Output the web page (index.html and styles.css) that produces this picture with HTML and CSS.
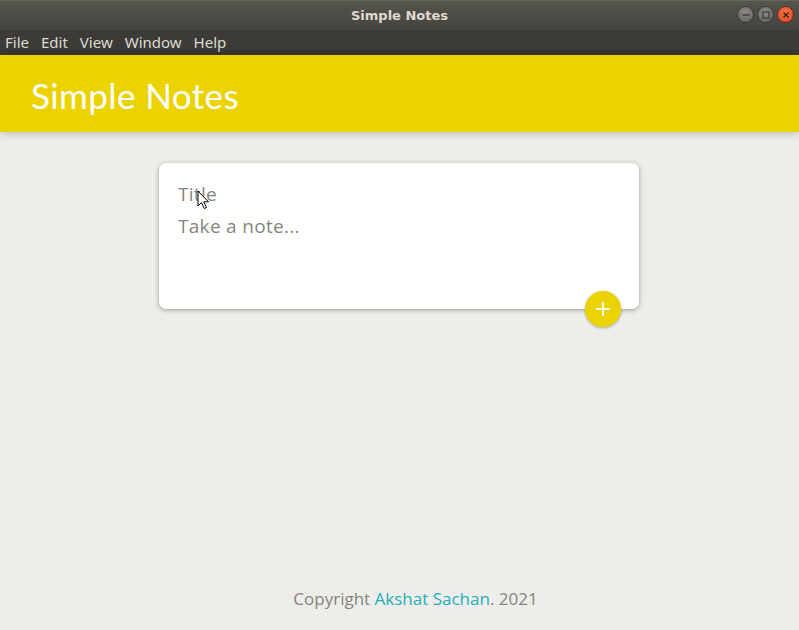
FILE: index.html
```html
<!DOCTYPE html>
<html>
<head>
<meta charset="utf-8">
<link rel="stylesheet" href="styles.css">
</head>
<body>
<div class="window">
  <div class="titlebar">
    <span class="wtitle">Simple Notes</span>
    <div class="wbtns">
      <span class="wb min"><svg width="14" height="14" viewBox="0 0 14 14"><line x1="3.5" y1="7" x2="10.5" y2="7" stroke="#3a3935" stroke-width="1.4"/></svg></span>
      <span class="wb max"><svg width="14" height="14" viewBox="0 0 14 14"><rect x="4" y="4" width="6" height="6" fill="none" stroke="#3a3935" stroke-width="1.2"/></svg></span>
      <span class="wb close"><svg width="14" height="14" viewBox="0 0 14 14"><path d="M4.5 4.5L9.5 9.5M9.5 4.5L4.5 9.5" stroke="#4a1a10" stroke-width="1.4"/></svg></span>
    </div>
  </div>
  <div class="menubar">
    <span>File</span><span>Edit</span><span>View</span><span>Window</span><span>Help</span>
  </div>
  <div class="app">
    <header class="header"><h1>Simple Notes</h1></header>
    <main class="main">
      <form class="note-form">
        <div class="field title">Title</div>
        <div class="field content">Take a note...</div>
        <button type="button" class="add"><svg width="20" height="20" viewBox="0 0 20 20"><path d="M10 3V17M3 10H17" stroke="#fff" stroke-width="2"/></svg></button>
        <svg class="cursor" width="14" height="22" viewBox="0 0 14 22"><path d="M1 1L1 16L4.5 12.5L7.2 18.5L9.5 17.5L6.8 11.8L11.5 11.8Z" fill="#fff" stroke="#000" stroke-width="1"/></svg>
      </form>
    </main>
    <footer class="footer">Copyright <a class="link">Akshat Sachan</a>. 2021</footer>
  </div>
</div>
</body>
</html>
```
FILE: styles.css
```css
html, body { margin: 0; padding: 0; }
body { width: 799px; height: 630px; overflow: hidden; background: #edede9; }
.window { width: 799px; height: 630px; display: flex; flex-direction: column; }
.titlebar {
  height: 30px; flex: none; position: relative;
  background: linear-gradient(#55544d, #45443e);
  display: flex; align-items: center; justify-content: center;
  border-top: 1px solid #67665e; box-sizing: border-box;
}
.wtitle { font-family: "DejaVu Sans", sans-serif; font-weight: bold; font-size: 13px; color: #dfdbd2; letter-spacing: 0; }
.wbtns { position: absolute; right: 5px; top: 5px; display: flex; gap: 3px; }
.wb { width: 17px; height: 17px; border-radius: 50%; display: flex; align-items: center; justify-content: center; }
.wb.min, .wb.max { background: radial-gradient(circle at 50% 35%, #8d8b84, #5f5e58); border: 1px solid #3a3935; box-sizing: border-box; }
.wb.close { background: radial-gradient(circle at 50% 35%, #f27650, #d9441f); border: 1px solid #6b2a18; box-sizing: border-box; }
.menubar {
  height: 25px; flex: none; background: #3c3b37;
  display: flex; align-items: center; padding-left: 5px; padding-bottom: 2px; box-sizing: border-box; gap: 12px;
  font-family: "Noto Sans", "DejaVu Sans", sans-serif; font-size: 15px; color: #dfdbd2;
}
.app { flex: 1; display: flex; flex-direction: column; position: relative; }
.header {
  height: 77px; flex: none; background: #ebd201;
  box-shadow: 0 0 10px rgba(0,0,0,0.3);
  display: flex; align-items: center; padding-left: 31px; position: relative; z-index: 1;
}
.header h1 {
  margin: 0; font-family: "Lato", sans-serif; font-weight: 400; font-size: 35px; color: #fff;
  letter-spacing: 0.4px; padding-top: 2px;
}
.main { flex: 1; display: flex; justify-content: center; padding-top: 31px; padding-right: 1px; }
.note-form {
  width: 480px; height: 146px; box-sizing: border-box; background: #fffffd;
  border-radius: 7px; box-shadow: 0 1px 5px rgba(0,0,0,0.35);
  padding: 20px 19px; position: relative; margin: 0;
  font-family: "Open Sans", "Lato", sans-serif; font-size: 19px; letter-spacing: 0.3px; color: #858580;
}
.field { line-height: 24px; }
.field.title { margin-top: -1px; }
.field.content { margin-top: 8px; }
.add {
  position: absolute; right: 18px; bottom: -18px; width: 36px; height: 36px;
  border-radius: 50%; border: none; background: #ebd201; padding: 0;
  box-shadow: 0 1px 3px rgba(0,0,0,0.3);
  display: flex; align-items: center; justify-content: center;
}
.cursor { position: absolute; left: 38px; top: 27px; }
.footer {
  text-align: center; padding-bottom: 20px; padding-left: 32px;
  font-family: "Open Sans", "Lato", sans-serif; font-size: 17px; color: #858580;
}
.link { color: #25adbb; }
```
